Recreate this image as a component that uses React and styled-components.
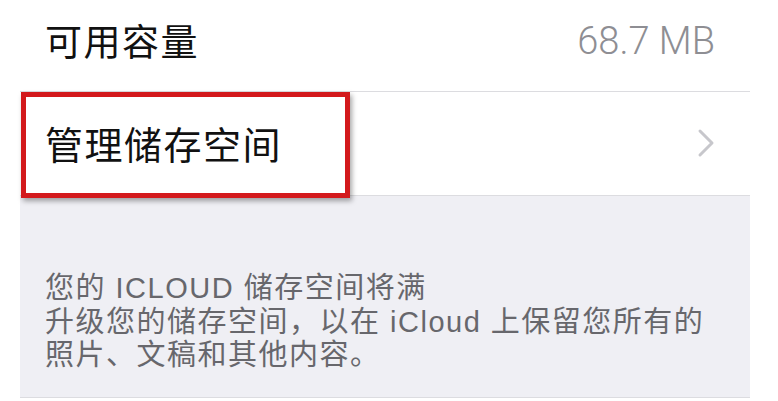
import React from "react";
import styled, { createGlobalStyle } from "styled-components";

const GlobalStyle = createGlobalStyle`
  html, body {
    margin: 0;
    padding: 0;
    background: #ffffff;
  }
  body {
    font-family: "Noto Sans CJK SC", "Noto Sans", sans-serif;
    -webkit-font-smoothing: antialiased;
  }
`;

const Page = styled.div`
  width: 778px;
  height: 401px;
  padding: 0 28px 0 20px;
  box-sizing: border-box;
  background: #ffffff;
  overflow: hidden;
`;

const Group = styled.div`
  display: flex;
  flex-direction: column;
  background: #ffffff;
`;

const Row = styled.div`
  position: relative;
  display: flex;
  align-items: center;
  justify-content: space-between;
  height: ${(p) => p.$height}px;
  padding: 0 35px ${(p) => p.$lift || 0}px 25px;
  box-sizing: border-box;
  border-bottom: 1px solid #dcdce0;
`;

const Label = styled.span`
  font-family: "Noto Sans CJK SC", "Noto Sans", sans-serif;
  font-size: ${(p) => p.$size || 37}px;
  letter-spacing: ${(p) => p.$spacing || 1}px;
  color: #111111;
  line-height: 1;
`;

const Value = styled.span`
  font-family: "Roboto", "Liberation Sans", sans-serif;
  font-weight: 300;
  font-size: 38px;
  color: #8e8e93;
  line-height: 1;
`;

const Highlight = styled.div`
  position: absolute;
  left: 1px;
  top: 0;
  width: 329px;
  height: 106px;
  box-sizing: border-box;
  border: 5px solid #d3191c;
  box-shadow: 2px 3px 5px rgba(0, 0, 0, 0.35);
  pointer-events: none;
`;

const Chevron = styled.svg`
  width: 18px;
  height: 30px;
  display: block;
`;

const Footer = styled.div`
  background: #efeff4;
  padding: 76px 25px 25px;
  border-bottom: 1px solid #dcdce0;
  height: 202px;
  box-sizing: border-box;
`;

const Note = styled.p`
  margin: 0;
  font-family: "Liberation Sans", "Noto Sans CJK SC", sans-serif;
  font-size: 29px;
  letter-spacing: 1.5px;
  line-height: 33.5px;
  color: #67676c;
  white-space: nowrap;
`;

function ChevronRight() {
  return (
    <Chevron viewBox="0 0 18 30">
      <path
        d="M3 3 L15 15 L3 27"
        fill="none"
        stroke="#c7c7cc"
        strokeWidth="3"
        strokeLinecap="round"
        strokeLinejoin="round"
      />
    </Chevron>
  );
}

export default function App() {
  return (
    <>
      <GlobalStyle />
      <Page>
        <Group>
          <Row $height={92} $lift={10}>
            <Label $size={37} $spacing={1.5}>可用容量</Label>
            <Value>68.7 MB</Value>
          </Row>
          <Row $height={104} $lift={2}>
            <Label $size={38} $spacing={1.5}>管理储存空间</Label>
            <ChevronRight />
            <Highlight />
          </Row>
        </Group>
        <Footer>
          <Note>您的 ICLOUD 储存空间将满</Note>
          <Note>升级您的储存空间，以在 iCloud 上保留您所有的</Note>
          <Note>照片、文稿和其他内容。</Note>
        </Footer>
      </Page>
    </>
  );
}
